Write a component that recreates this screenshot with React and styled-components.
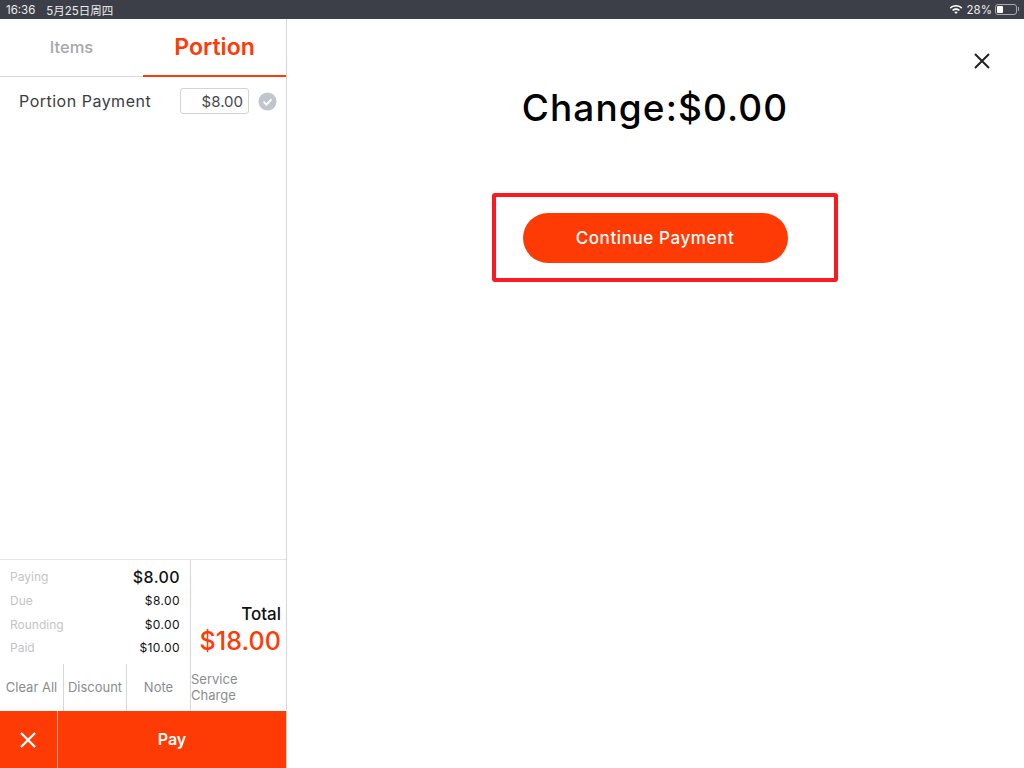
import styled, { createGlobalStyle } from "styled-components"

const GlobalStyle = createGlobalStyle`
    html, body {
        margin: 0;
        padding: 0;
        background: #fff;
    }
    * {
        box-sizing: border-box;
    }
    body {
        font-family: Inter, "Noto Sans CJK SC", "Liberation Sans", sans-serif;
    }
`

const Page = styled.div`
    display: flex;
    flex-direction: column;
    width: 1024px;
    height: 768px;
    overflow: hidden;
`

const StatusBar = styled.header`
    display: flex;
    justify-content: space-between;
    align-items: center;
    height: 19px;
    padding: 0 7px 0 6px;
    background: #3c3e48;
    color: #eceded;
    font-size: 11.5px;
`

const StatusGroup = styled.div`
    display: flex;
    align-items: center;
    gap: ${(p) => p.$gap || 0}px;
`

const Battery = styled.div`
    position: relative;
    width: 22px;
    height: 11px;
    margin-left: -1px;
    padding: 1px;
    border: 1px solid #a9aab0;
    border-radius: 3px;

    &::before {
        content: "";
        display: block;
        width: 6px;
        height: 100%;
        background: #fff;
        border-radius: 1px;
    }

    &::after {
        content: "";
        position: absolute;
        top: 2px;
        right: -3px;
        width: 1px;
        height: 4px;
        background: #a9aab0;
    }
`

const Body = styled.div`
    display: flex;
    flex: 1;
    min-height: 0;
`

const Sidebar = styled.aside`
    display: flex;
    flex-direction: column;
    width: 287px;
    border-right: 1px solid #d5d6d8;
`

const Tabs = styled.nav`
    display: grid;
    grid-template-columns: 143px 143px;
    height: 58px;
    border-bottom: 1px solid #d5d6d8;
`

const Tab = styled.div`
    display: flex;
    justify-content: center;
    align-items: center;
    height: ${(p) => (p.$active ? "58px" : "57px")};
    padding-bottom: ${(p) => (p.$active ? "0" : "2px")};
    border-bottom: ${(p) => (p.$active ? "2px solid #ff3b05" : "none")};
    color: ${(p) => (p.$active ? "#ff3b05" : "#a6a7a9")};
    font-size: ${(p) => (p.$active ? "23px" : "16.5px")};
    font-weight: ${(p) => (p.$active ? 600 : 500)};
`

const PortionRow = styled.div`
    display: flex;
    align-items: center;
    height: 26px;
    margin-top: 11px;
    padding-left: 19px;
    color: #3b3c40;
    font-size: 16px;
`

const PortionLabel = styled.span`
    flex: 1;
    letter-spacing: 0.5px;
`

const AmountInput = styled.div`
    display: flex;
    justify-content: flex-end;
    align-items: center;
    width: 69px;
    height: 26px;
    padding-right: 5px;
    border: 1px solid #d2d3d6;
    border-radius: 3px;
    font-size: 15px;
    color: #46474b;
`

const CheckIcon = styled.svg`
    width: 19px;
    height: 19px;
    margin: 0 9px 0 9px;
`

const Spacer = styled.div`
    flex: 1;
`

const Summary = styled.section`
    display: grid;
    grid-template-columns: 190px 96px;
    height: 105px;
    border-top: 1px solid #e3e4e6;
`

const Lines = styled.div`
    display: grid;
    grid-auto-rows: 23.7px;
    align-items: center;
    padding: 5px 10px 0 10px;
`

const Line = styled.div`
    display: flex;
    justify-content: space-between;
    align-items: center;
`

const LineLabel = styled.span`
    color: #c3c4c6;
    font-size: 12px;
`

const LineValue = styled.span`
    color: #111;
    font-size: ${(p) => (p.$big ? "16px" : "12px")};
    font-weight: ${(p) => (p.$big ? 500 : 400)};
    letter-spacing: 0.4px;
`

const TotalBox = styled.div`
    display: flex;
    flex-direction: column;
    justify-content: center;
    align-items: flex-end;
    padding: 35px 5px 0 0;
    border-left: 1px solid #d5d6d8;
`

const TotalLabel = styled.span`
    color: #111;
    font-size: 17px;
    font-weight: 500;
`

const TotalValue = styled.span`
    margin-top: 2px;
    color: #ff3b05;
    font-size: 25px;
    font-weight: 500;
    letter-spacing: 0.1px;
`

const Actions = styled.div`
    display: grid;
    grid-template-columns: 64px 63px 64px 95px;
    height: 47px;
`

const Action = styled.div`
    display: flex;
    align-items: center;
    justify-content: ${(p) => (p.$left ? "flex-start" : "center")};
    padding-bottom: 2px;
    border-right: ${(p) => (p.$last ? "none" : "1px solid #d5d6d8")};
    color: #8b8c8f;
    font-size: 13px;
    line-height: 16px;
`

const PayBar = styled.div`
    display: flex;
    height: 57px;
    background: #ff3b05;
    color: #fff;
`

const CancelButton = styled.div`
    display: flex;
    justify-content: center;
    align-items: center;
    width: 58px;
    padding-right: 1px;
    border-right: 1px solid #f3a78f;
`

const PayButton = styled.div`
    display: flex;
    flex: 1;
    justify-content: center;
    align-items: center;
    padding-bottom: 2px;
    font-size: 16px;
    font-weight: 600;
`

const Main = styled.main`
    position: relative;
    display: flex;
    flex: 1;
    flex-direction: column;
    align-items: center;
    padding: 65px 0 0 0;
    margin-left: -1px;
`

const CloseIcon = styled.svg`
    position: absolute;
    top: 33px;
    right: 33px;
    width: 18px;
    height: 18px;
`

const ChangeText = styled.h1`
    margin: 0;
    color: #000;
    font-size: 37px;
    line-height: 48px;
    font-weight: 500;
    letter-spacing: 1.1px;
`

const Highlight = styled.div`
    display: flex;
    align-items: center;
    width: 346px;
    height: 89px;
    margin: 61px 0 0 19px;
    padding-left: 27px;
    border: 4px solid #fb1a1f;
    border-radius: 3px;
`

const ContinueButton = styled.button`
    width: 265px;
    height: 50px;
    border: none;
    border-radius: 25px;
    background: #ff3b05;
    color: #fff;
    font-family: inherit;
    font-size: 17px;
    font-weight: 500;
    letter-spacing: 0.6px;
`

const lines = [
    { label: "Paying", value: "$8.00", big: true },
    { label: "Due", value: "$8.00" },
    { label: "Rounding", value: "$0.00" },
    { label: "Paid", value: "$10.00" },
]

const Cross = ({ color, width }) => (
    <svg width="18" height="18" viewBox="0 0 18 18" fill="none">
        <path d="M2 2 L16 16 M16 2 L2 16" stroke={color} strokeWidth={width} />
    </svg>
)

const App = () => {
    return (
        <Page>
            <GlobalStyle />
            <StatusBar>
                <StatusGroup $gap={11}>
                    <span>16:36</span>
                    <span>5月25日周四</span>
                </StatusGroup>
                <StatusGroup $gap={4}>
                    <svg width="14" height="11" viewBox="0 0 14 11" fill="#fff">
                        <path d="M7 1C4.5 1 2.3 2 .7 3.6l1.1 1.2C3.1 3.4 5 2.6 7 2.6s3.9.8 5.2 2.2l1.1-1.2C11.7 2 9.5 1 7 1z" />
                        <path d="M7 4.3c-1.5 0-2.9.6-3.9 1.6l1.1 1.2C5 6.4 6 6 7 6s2 .4 2.8 1.1l1.1-1.2C9.9 4.9 8.5 4.3 7 4.3z" />
                        <path d="M7 7.4c-.7 0-1.3.3-1.8.7L7 10l1.8-1.9c-.5-.4-1.1-.7-1.8-.7z" />
                    </svg>
                    <span>28%</span>
                    <Battery />
                </StatusGroup>
            </StatusBar>
            <Body>
                <Sidebar>
                    <Tabs>
                        <Tab>Items</Tab>
                        <Tab $active>Portion</Tab>
                    </Tabs>
                    <PortionRow>
                        <PortionLabel>Portion Payment</PortionLabel>
                        <AmountInput>$8.00</AmountInput>
                        <CheckIcon viewBox="0 0 20 20">
                            <circle cx="10" cy="10" r="9.5" fill="#c1c6cc" />
                            <path d="M5.8 10.2l3 3 5.4-5.6" fill="none" stroke="#fff" strokeWidth="2" />
                        </CheckIcon>
                    </PortionRow>
                    <Spacer />
                    <Summary>
                        <Lines>
                            {lines.map((line) => (
                                <Line key={line.label}>
                                    <LineLabel>{line.label}</LineLabel>
                                    <LineValue $big={line.big}>{line.value}</LineValue>
                                </Line>
                            ))}
                        </Lines>
                        <TotalBox>
                            <TotalLabel>Total</TotalLabel>
                            <TotalValue>$18.00</TotalValue>
                        </TotalBox>
                    </Summary>
                    <Actions>
                        <Action>Clear All</Action>
                        <Action>Discount</Action>
                        <Action>Note</Action>
                        <Action $left $last>Service<br />Charge</Action>
                    </Actions>
                    <PayBar>
                        <CancelButton>
                            <Cross color="#fff" width="2.4" />
                        </CancelButton>
                        <PayButton>Pay</PayButton>
                    </PayBar>
                </Sidebar>
                <Main>
                    <CloseIcon viewBox="0 0 18 18" fill="none">
                        <path d="M2 2 L16 16 M16 2 L2 16" stroke="#222" strokeWidth="2" />
                    </CloseIcon>
                    <ChangeText>Change:$0.00</ChangeText>
                    <Highlight>
                        <ContinueButton>Continue Payment</ContinueButton>
                    </Highlight>
                </Main>
            </Body>
        </Page>
    )
}

export default App
